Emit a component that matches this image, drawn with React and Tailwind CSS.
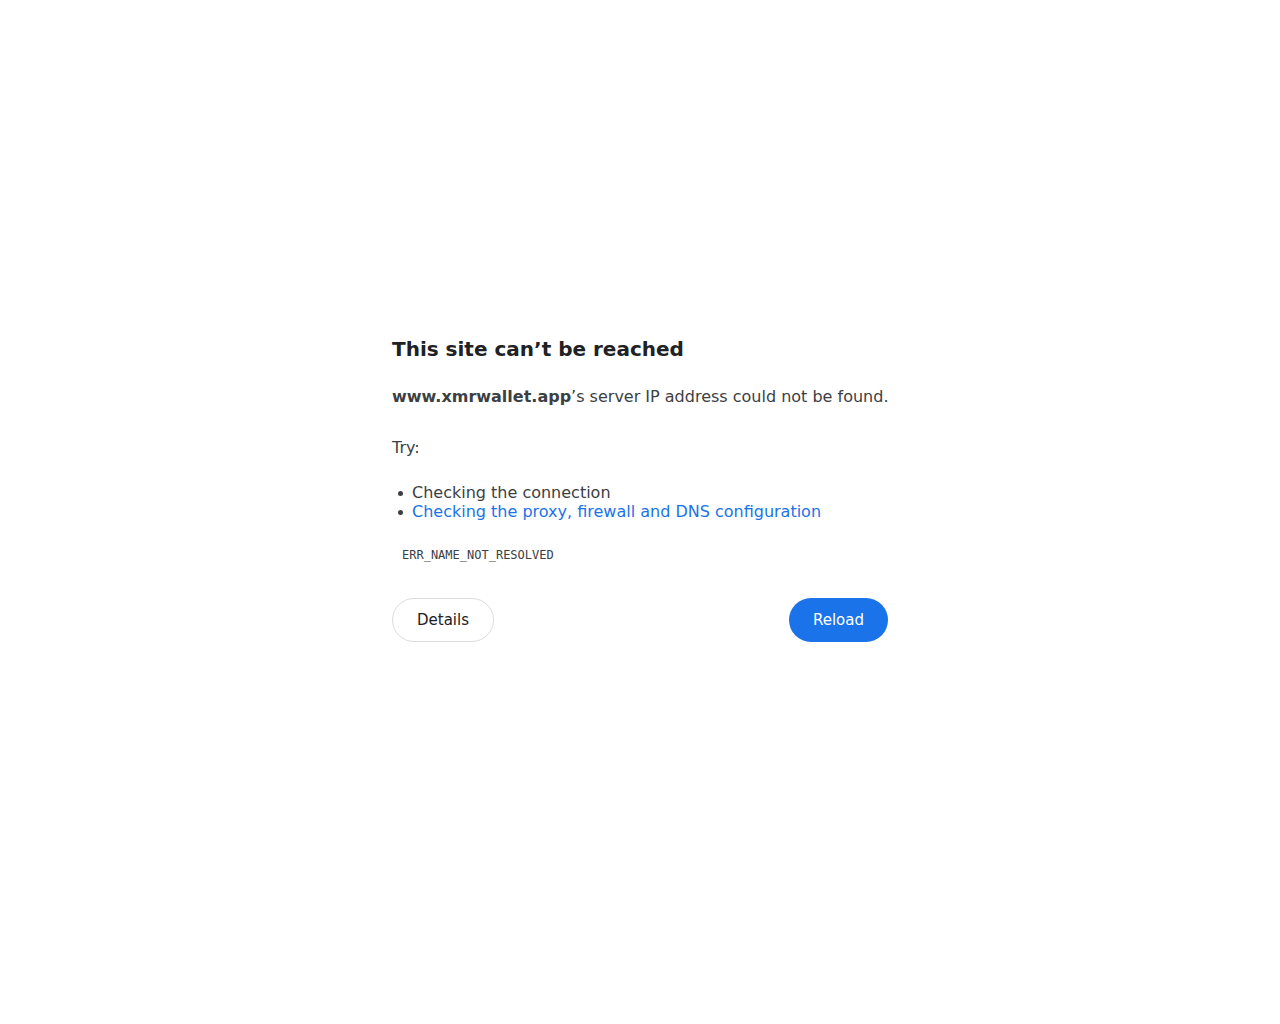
export default function App() {
  const font = { fontFamily: '"DejaVu Sans", sans-serif' };
  return (
    <div className="min-h-[1024px] bg-white" style={font}>
      <div className="mx-auto w-[496px] pt-[337px]">
        <h1 className="text-[20px] leading-[25px] font-bold text-[#202124]">
          This site can’t be reached
        </h1>
        <p className="mt-[23px] whitespace-nowrap text-[16px] leading-[24px] text-[#3c4043]">
          <span className="font-bold">www.xmrwallet.app</span>’s server IP address could not be found.
        </p>
        <p className="mt-[27px] text-[16px] leading-[24px] text-[#3c4043]">Try:</p>
        <ul className="mt-[23px] text-[16px] leading-[19px] text-[#3c4043]">
          <li className="flex items-center">
            <span className="flex w-[20px] pl-[6px]">
              <span className="mt-[2px] block h-[5px] w-[5px] rounded-full bg-[#3c4043]"></span>
            </span>
            <span>Checking the connection</span>
          </li>
          <li className="flex items-center">
            <span className="flex w-[20px] pl-[6px]">
              <span className="mt-[2px] block h-[5px] w-[5px] rounded-full bg-[#3c4043]"></span>
            </span>
            <a href="#" className="text-[#1a73e8]">
              Checking the proxy, firewall and DNS configuration
            </a>
          </li>
        </ul>
        <div
          className="mt-[26px] ml-[10px] text-[12px] leading-[16px] text-[#3c4043]"
          style={{ fontFamily: '"DejaVu Sans Mono", monospace' }}
        >
          ERR_NAME_NOT_RESOLVED
        </div>
        <div className="mt-[35px] flex items-center justify-between">
          <button className="h-[44px] rounded-full border border-[#dadce0] bg-white px-6 text-[15px] text-[#202124]">
            Details
          </button>
          <button className="h-[44px] rounded-full bg-[#1a73e8] px-6 text-[15px] text-white">
            Reload
          </button>
        </div>
      </div>
    </div>
  );
}
